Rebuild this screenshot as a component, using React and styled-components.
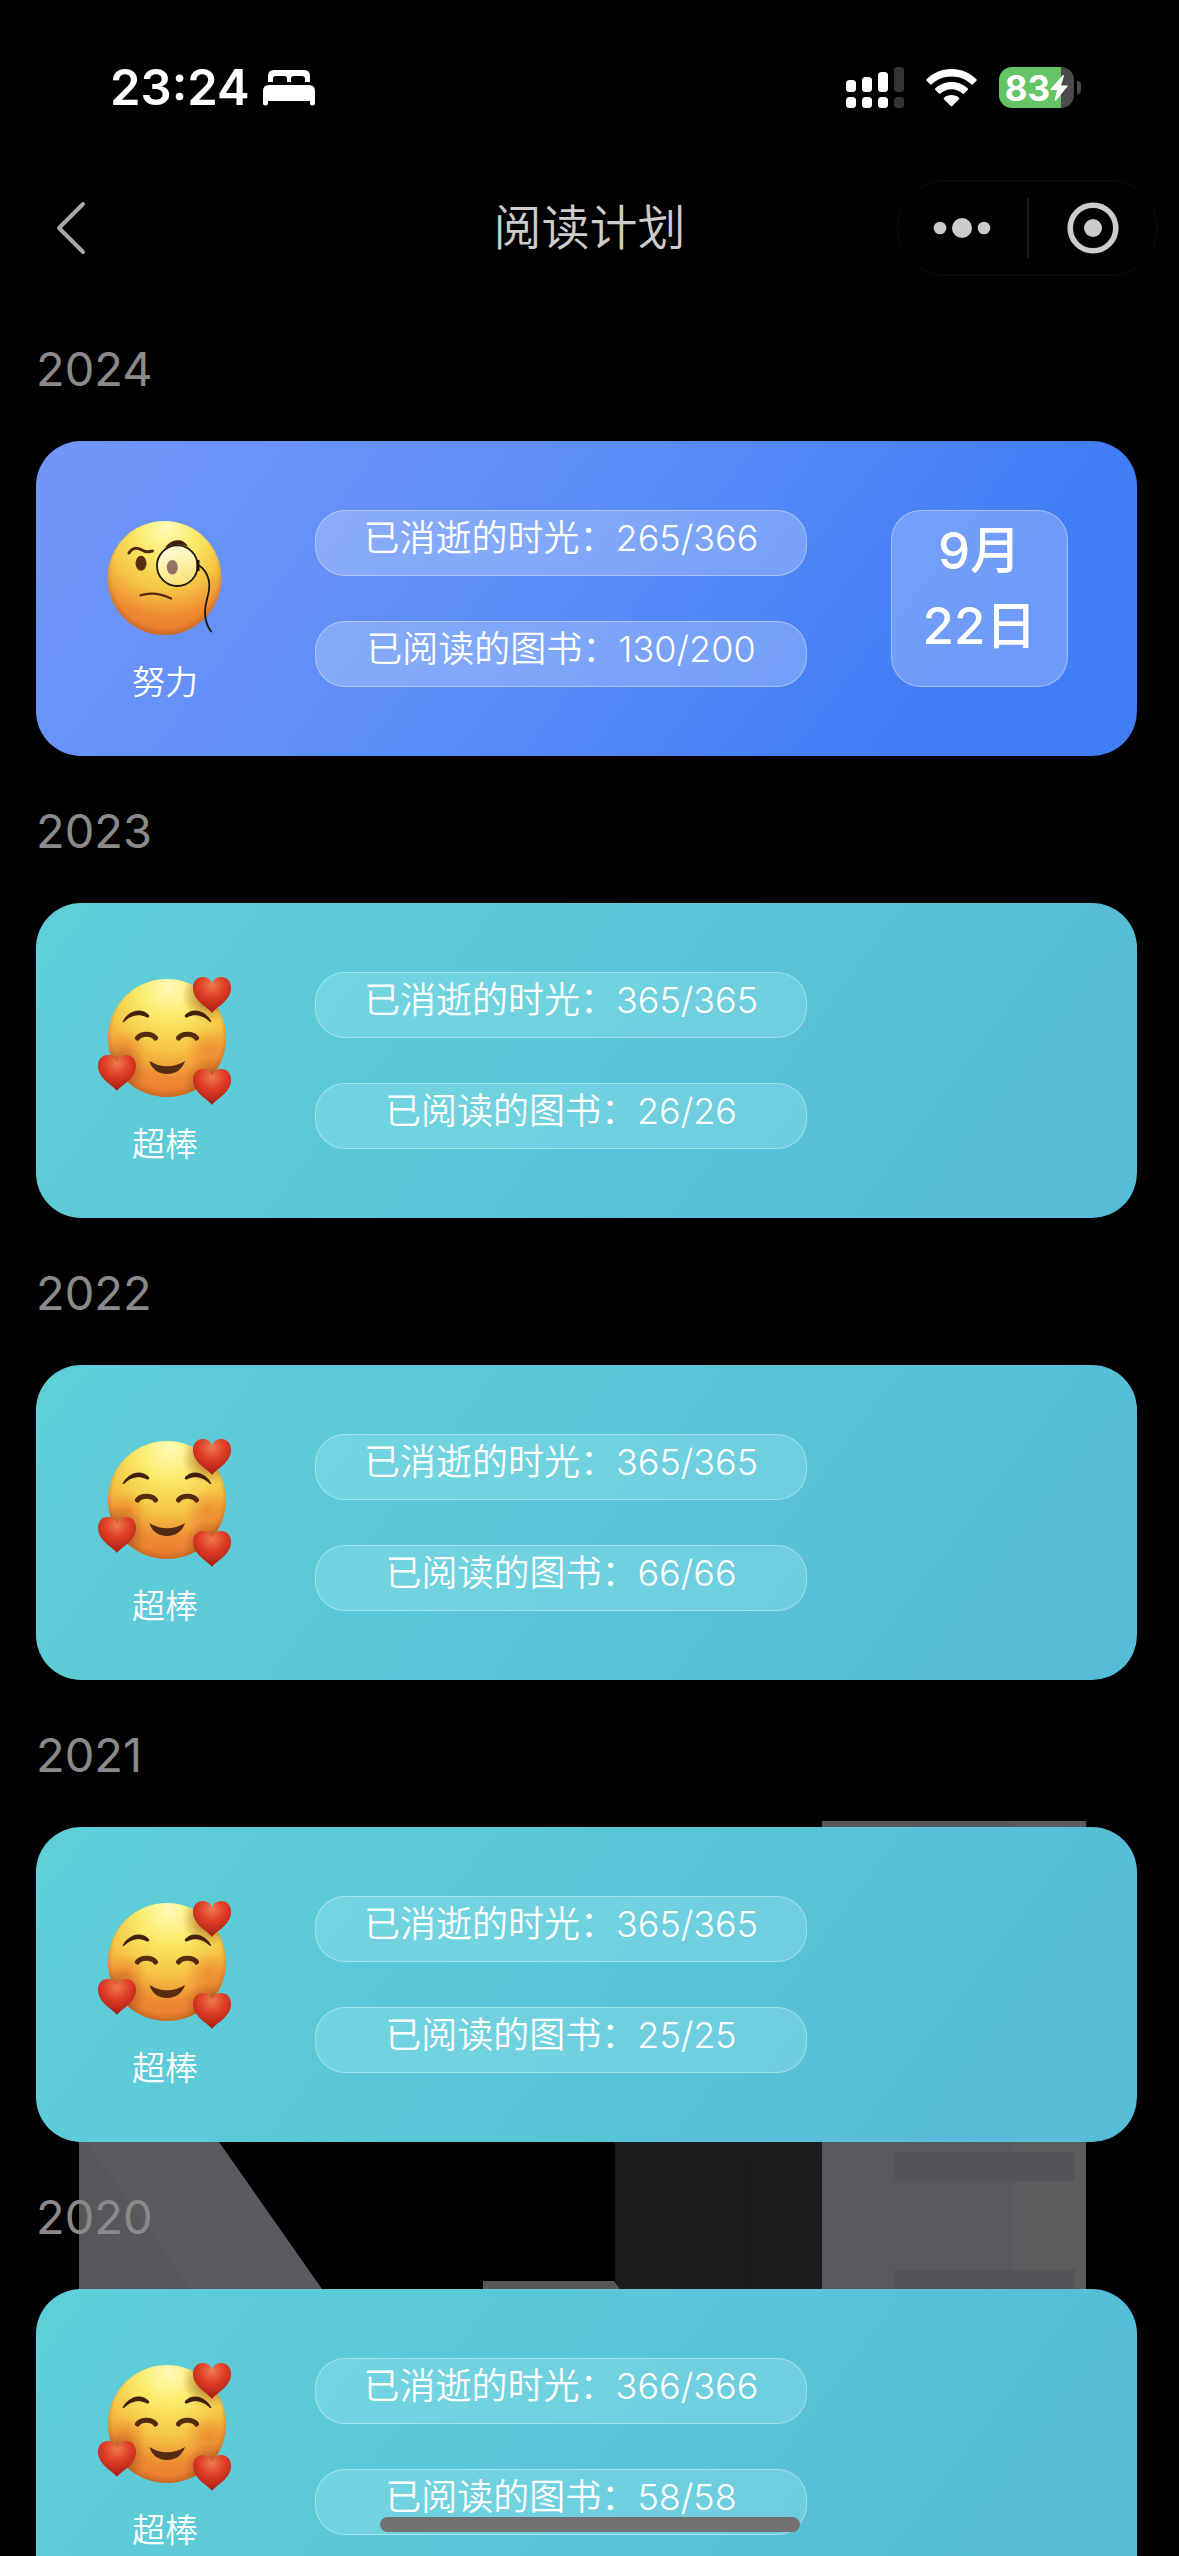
import React from "react";
import styled, { createGlobalStyle } from "styled-components";

const GlobalStyle = createGlobalStyle`
  * {
    box-sizing: border-box;
  }
  body {
    margin: 0;
    background: #000;
    color: #fff;
    font-family: Inter, "Noto Sans CJK SC", sans-serif;
  }
  button {
    padding: 0;
    border: none;
    background: none;
    cursor: pointer;
  }
  svg {
    display: block;
  }
`;

const Screen = styled.div`
  position: relative;
  display: flex;
  flex-direction: column;
  height: 100vh;
  overflow: hidden;
`;

const Backdrop = styled.svg`
  position: absolute;
  left: 0;
  bottom: 0;
  width: 100%;
  height: auto;
`;

const StatusBar = styled.div`
  display: flex;
  align-items: center;
  justify-content: space-between;
  flex: none;
  height: 162px;
  padding: 13px 98px 0 110px;
`;

const StatusGroup = styled.div`
  display: flex;
  align-items: center;
  gap: ${(props) => props.$gap}px;
`;

const Clock = styled.time`
  font-size: 49px;
  font-weight: 600;
  line-height: 60px;
`;

const Battery = styled.div`
  display: flex;
  align-items: center;
  gap: 3px;
`;

const BatteryBody = styled.div`
  display: flex;
  align-items: center;
  justify-content: center;
  width: 75px;
  height: 41px;
  border-radius: 13px;
  background: linear-gradient(
    to right,
    #65c466 ${(props) => props.$level}%,
    #4b4b4d ${(props) => props.$level}%
  );
  font-size: 35px;
  font-weight: 700;
`;

const BatteryTip = styled.div`
  width: 4px;
  height: 13px;
  border-radius: 0 6px 6px 0;
  background: #4b4b4d;
`;

const NavBar = styled.header`
  display: grid;
  grid-template-columns: 1fr auto 1fr;
  align-items: center;
  flex: none;
  height: 132px;
  padding: 0 21px;
`;

const BackButton = styled.button`
  justify-self: start;
  margin-left: 35px;
`;

const Title = styled.h1`
  margin: 0;
  color: #ccc;
  font-size: 48px;
  font-weight: 350;
  line-height: 72px;
`;

const Capsule = styled.div`
  display: flex;
  align-items: center;
  justify-self: end;
  width: 261px;
  height: 96px;
  border: 1px solid #0d0d0d;
  border-radius: 48px;
`;

const CapsuleButton = styled.button`
  display: flex;
  flex: 1;
  align-items: center;
  justify-content: center;
  height: 60px;
  & + & {
    border-left: 2px solid #1c1c1c;
  }
`;

const PlanList = styled.main`
  position: relative;
  flex: 1;
  min-height: 0;
  padding: 0 42px 0 36px;
  overflow-y: auto;
  scrollbar-width: none;
`;

const Year = styled.h2`
  margin: 0;
  padding-top: 3px;
  color: #8a8a8a;
  font-size: 47px;
  font-weight: 400;
  line-height: 144px;
`;

const cardColors = {
  blue: "linear-gradient(127deg, #7397f8 0%, #5a8df7 45%, #417df6 82%)",
  teal: "linear-gradient(127deg, #5fcfd8 0%, #5ac6d7 48%, #56bcd8 88%)",
};

const glassColors = {
  blue: "rgba(255, 255, 255, 0.24)",
  teal: "rgba(200, 255, 255, 0.2)",
};

const Card = styled.article`
  display: flex;
  align-items: center;
  gap: 69px;
  height: 315px;
  padding: 0 69px 0 48px;
  border-radius: 45px;
  background: ${(props) => cardColors[props.$tone]};
`;

const Mood = styled.div`
  display: flex;
  flex-direction: column;
  align-items: center;
  flex: none;
  width: 162px;
  padding-top: 12px;
`;

const MoodLabel = styled.span`
  margin-top: 11px;
  font-size: 33px;
  font-weight: 350;
  line-height: 48px;
`;

const Stats = styled.div`
  display: flex;
  flex-direction: column;
  gap: 45px;
  flex: 0 1 492px;
`;

const Pill = styled.div`
  height: 66px;
  border: 1px solid rgba(255, 255, 255, 0.35);
  border-radius: 30px;
  background: ${(props) => glassColors[props.$tone]};
  font-size: 36px;
  font-weight: 350;
  line-height: 54px;
  text-align: center;
  white-space: nowrap;
`;

const DateBox = styled.time`
  display: flex;
  flex-direction: column;
  align-items: center;
  flex: none;
  width: 177px;
  height: 177px;
  margin-left: auto;
  padding-top: 2px;
  border: 1px solid rgba(255, 255, 255, 0.35);
  border-radius: 30px;
  background: ${(props) => glassColors[props.$tone]};
  font-size: 51px;
  font-weight: 500;
  line-height: 75px;
`;

const HomeIndicator = styled.div`
  position: absolute;
  bottom: 24px;
  left: 50%;
  width: 420px;
  height: 15px;
  margin-left: -210px;
  border-radius: 8px;
  background: #727272;
`;

const Defs = styled.svg`
  position: absolute;
  width: 0;
  height: 0;
`;

const EmojiDefs = () => (
  <Defs aria-hidden="true">
    <defs>
      <radialGradient id="face" cx="0.52" cy="0.06" r="0.98">
        <stop offset="0" stopColor="#fffab8" />
        <stop offset="0.28" stopColor="#fbea68" />
        <stop offset="0.55" stopColor="#f5c544" />
        <stop offset="0.8" stopColor="#ee8a33" />
        <stop offset="1" stopColor="#e8732c" />
      </radialGradient>
      <radialGradient id="rim" cx="0.5" cy="0.47" r="0.54">
        <stop offset="0.86" stopColor="#a85a18" stopOpacity="0" />
        <stop offset="1" stopColor="#a85a18" stopOpacity="0.55" />
      </radialGradient>
      <radialGradient id="shade">
        <stop offset="0.3" stopColor="#8a4312" stopOpacity="0.6" />
        <stop offset="1" stopColor="#a85a18" stopOpacity="0" />
      </radialGradient>
      <radialGradient id="blush">
        <stop offset="0" stopColor="#ea7a2b" stopOpacity="0.6" />
        <stop offset="1" stopColor="#ea7a2b" stopOpacity="0" />
      </radialGradient>
      <radialGradient id="heartFill" cx="0.5" cy="0.22" r="0.8">
        <stop offset="0" stopColor="#ee7a4c" />
        <stop offset="0.45" stopColor="#df3c25" />
        <stop offset="1" stopColor="#a01a12" />
      </radialGradient>
      <linearGradient id="lens" x1="0" y1="0" x2="0.3" y2="1">
        <stop offset="0" stopColor="#fffef0" stopOpacity="0.95" />
        <stop offset="1" stopColor="#fdeb8c" stopOpacity="0.75" />
      </linearGradient>
      <clipPath id="faceClip">
        <circle cx="74" cy="73" r="59" />
      </clipPath>
      <path
        id="heart"
        d="M19 36C16 31 0 24 0 11C0 4 4 0 10 0C14 0 18 2 19 7C20 2 24 0 28 0C34 0 38 4 38 11C38 24 22 31 19 36Z"
        fill="url(#heartFill)"
      />
    </defs>
  </Defs>
);

const MonocleFace = () => (
  <svg width="144" height="144" viewBox="0 0 144 144" aria-hidden="true">
    <circle cx="71.500" cy="75" r="57" fill="url(#face)" />
    <circle cx="71.500" cy="75" r="57" fill="url(#rim)" />
    <path d="M36 50C40 43 46 45 50 47.500C54 50 57 48.500 59.500 48" fill="none" stroke="#52270d" strokeWidth="3" strokeLinecap="round" />
    <ellipse cx="48" cy="60.300" rx="5.500" ry="7.500" fill="#5c2c10" />
    <path d="M72 45C77 36 90 34 95 43.500C88 41 79 41 72 45Z" fill="#43200c" />
    <circle cx="84.300" cy="62.700" r="20.300" fill="url(#lens)" />
    <ellipse cx="79.300" cy="64.300" rx="5.500" ry="7.300" fill="#937366" />
    <circle cx="84.300" cy="62.700" r="20.300" fill="none" stroke="#1c1a10" strokeWidth="1.800" />
    <path d="M105 57V68" stroke="#14120c" strokeWidth="3" />
    <path d="M106 62.500C113 67 117.500 76 116 87C115 95 112 100 112 109C112 117 114 123 118 128.500" fill="none" stroke="#1c1a10" strokeWidth="1.800" strokeLinecap="round" />
    <path d="M47.500 92.300C58 89 69 91 78 95.500" fill="none" stroke="#52270d" strokeWidth="2.200" strokeLinecap="round" />
  </svg>
);

const HeartsFace = () => (
  <svg width="144" height="144" viewBox="0 0 144 144" aria-hidden="true">
    <circle cx="74" cy="73" r="59" fill="url(#face)" />
    <circle cx="74" cy="73" r="59" fill="url(#rim)" />
    <g clipPath="url(#faceClip)">
      <circle cx="34" cy="84" r="20" fill="url(#blush)" />
      <circle cx="114" cy="84" r="22" fill="url(#blush)" />
      <circle cx="116" cy="30" r="27" fill="url(#shade)" />
      <circle cx="26" cy="106" r="28" fill="url(#shade)" />
      <circle cx="117" cy="119" r="27" fill="url(#shade)" />
    </g>
    <path d="M29.500 57C34 47 47 41 56 50C57 52 55 53.500 53 52C45 48 37 51 31 57Z" fill="#43200c" />
    <path d="M118.500 57C114 47 101 41 92 50C91 52 93 53.500 95 52C103 48 111 51 117 57Z" fill="#43200c" />
    <path d="M44.500 73C48 68 59 68 62.500 73M85.500 73C89 68 100 68 103.500 73" fill="none" stroke="#552b10" strokeWidth="5" strokeLinecap="round" />
    <path d="M56.500 96C67 103 81 103 92 96C89 105 82 109 74 109C66 109 59 105 56.500 96Z" fill="#552b14" />
    <use href="#heart" x="100" y="12" />
    <use href="#heart" x="5" y="90" />
    <use href="#heart" x="100" y="104" />
  </svg>
);

const BedIcon = () => (
  <svg width="52" height="36" viewBox="0 0 52 36" fill="#fff" aria-hidden="true">
    <path d="M5 12V6Q5 0 11 0H41Q47 0 47 6V12H42V9Q42 6 39 6H31Q28 6 28 9V12H24V9Q24 6 21 6H13Q10 6 10 9V12Z" />
    <path d="M6 15H46Q52 15 52 21V33Q52 35.500 49.500 35.500Q47 35.500 47 33V31H5V33Q5 35.500 2.500 35.500Q0 35.500 0 33V21Q0 15 6 15Z" />
  </svg>
);

const SignalIcon = () => (
  <svg width="58" height="41" viewBox="0 0 58 41" fill="#fff" aria-hidden="true">
    <rect x="0" y="13" width="10" height="12" rx="3.500" />
    <rect x="16" y="10" width="10" height="15" rx="3.500" />
    <rect x="32" y="5" width="10" height="20" rx="3.500" />
    <rect x="48" y="0" width="10" height="25" rx="3.500" fill="#333" />
    <rect x="0" y="30" width="10" height="11" rx="3.500" />
    <rect x="16" y="30" width="10" height="11" rx="3.500" />
    <rect x="32" y="30" width="10" height="11" rx="3.500" />
    <rect x="48" y="30" width="10" height="11" rx="3.500" fill="#333" />
  </svg>
);

const WifiIcon = () => (
  <svg width="51" height="38" viewBox="0 0 51 38" fill="#fff" aria-hidden="true">
    <path d="M25.500 0C35.500 0 44 4 50.500 10.300Q51 11 50.500 11.700L46.800 15.300Q46 16 45.300 15.300C40 10.200 33 7.500 25.500 7.500C18 7.500 11 10.200 5.700 15.300Q5 16 4.200 15.300L0.500 11.700Q0 11 0.500 10.300C7 4 15.500 0 25.500 0Z" />
    <path d="M25.500 13C32 13 37.500 15.500 41.800 19.400Q42.500 20 41.800 20.700L38 24.600Q37.300 25.200 36.600 24.600C33.500 21.900 29.700 20.300 25.500 20.300C21.300 20.300 17.500 21.900 14.400 24.600Q13.700 25.200 13 24.600L9.200 20.700Q8.500 20 9.200 19.400C13.500 15.500 19 13 25.500 13Z" />
    <path d="M25.500 26C28.500 26 31 27 33 28.700Q33.800 29.400 33 30.200L26.300 37Q25.500 37.700 24.700 37L18 30.200Q17.200 29.400 18 28.700C20 27 22.500 26 25.500 26Z" />
  </svg>
);

const BoltIcon = () => (
  <svg width="18" height="26" viewBox="0 0 18 26" fill="#fff" aria-hidden="true">
    <path d="M13 0L0.500 14Q0 15 1 15H7L4.500 25Q5 26 6 25.500L17.500 11.500Q18 10.500 17 10.500H11L14 1Q14 0 13 0Z" />
  </svg>
);

/* Large faded shapes that show between the cards */
const BackdropArt = () => (
  <Backdrop viewBox="0 0 1179 735" aria-hidden="true">
    <path d="M79 236L136 224L219 321L322 468L475 735H79Z" fill="#5b5b5f" />
    <path d="M79 310L87 321L191 468L378 735H79Z" fill="#56575a" />
    <path d="M483 460H614L620 468V735H483Z" fill="#58585b" />
    <path d="M615 321H822V735H780L620 468L615 460Z" fill="#1b1c1e" />
    <rect x="746" y="339" width="76" height="396" fill="#1c1c1c" stroke="#171717" />
    <rect x="822" width="191" height="735" fill="#58595c" />
    <rect x="1013" width="73" height="735" fill="#5c5c5d" />
    <rect x="894" y="331" width="181" height="29" fill="#535459" />
    <rect x="894" y="449" width="181" height="29" fill="#535459" />
  </Backdrop>
);

const plans = [
  { year: 2024, tone: "blue", mood: "努力", days: "265/366", books: "130/200", date: ["9月", "22日"] },
  { year: 2023, tone: "teal", mood: "超棒", days: "365/365", books: "26/26" },
  { year: 2022, tone: "teal", mood: "超棒", days: "365/365", books: "66/66" },
  { year: 2021, tone: "teal", mood: "超棒", days: "365/365", books: "25/25" },
  { year: 2020, tone: "teal", mood: "超棒", days: "366/366", books: "58/58" },
];

const PlanCard = ({ plan }) => (
  <Card $tone={plan.tone}>
    <Mood>
      {plan.mood === "超棒" ? <HeartsFace /> : <MonocleFace />}
      <MoodLabel>{plan.mood}</MoodLabel>
    </Mood>
    <Stats>
      <Pill $tone={plan.tone}>已消逝的时光：{plan.days}</Pill>
      <Pill $tone={plan.tone}>已阅读的图书：{plan.books}</Pill>
    </Stats>
    {plan.date && (
      <DateBox $tone={plan.tone} dateTime="2024-09-22">
        <span>{plan.date[0]}</span>
        <span>{plan.date[1]}</span>
      </DateBox>
    )}
  </Card>
);

const App = () => {
  return (
    <Screen>
      <GlobalStyle />
      <EmojiDefs />
      <BackdropArt />
      <StatusBar>
        <StatusGroup $gap={13}>
          <Clock>23:24</Clock>
          <BedIcon />
        </StatusGroup>
        <StatusGroup $gap={22}>
          <SignalIcon />
          <WifiIcon />
          <Battery>
            <BatteryBody $level={83}>
              83
              <BoltIcon />
            </BatteryBody>
            <BatteryTip />
          </Battery>
        </StatusGroup>
      </StatusBar>
      <NavBar>
        <BackButton type="button" aria-label="返回">
          <svg width="30" height="54" viewBox="0 0 30 54" fill="none" stroke="#a8a8a8" strokeWidth="4" strokeLinecap="round" strokeLinejoin="round">
            <path d="M27 3L3 27L27 51" />
          </svg>
        </BackButton>
        <Title>阅读计划</Title>
        <Capsule>
          <CapsuleButton type="button" aria-label="更多">
            <svg width="58" height="20" viewBox="0 0 58 20" fill="#ccc">
              <circle cx="7" cy="10" r="6.300" />
              <circle cx="29" cy="10" r="10" />
              <circle cx="51" cy="10" r="6.300" />
            </svg>
          </CapsuleButton>
          <CapsuleButton type="button" aria-label="关闭">
            <svg width="52" height="52" viewBox="0 0 52 52">
              <circle cx="26" cy="26" r="22.800" fill="none" stroke="#ccc" strokeWidth="5.600" />
              <circle cx="26" cy="26" r="9" fill="#ccc" />
            </svg>
          </CapsuleButton>
        </Capsule>
      </NavBar>
      <PlanList>
        {plans.map((plan) => (
          <section key={plan.year}>
            <Year>{plan.year}</Year>
            <PlanCard plan={plan} />
          </section>
        ))}
      </PlanList>
      <HomeIndicator />
    </Screen>
  );
};

export default App;
